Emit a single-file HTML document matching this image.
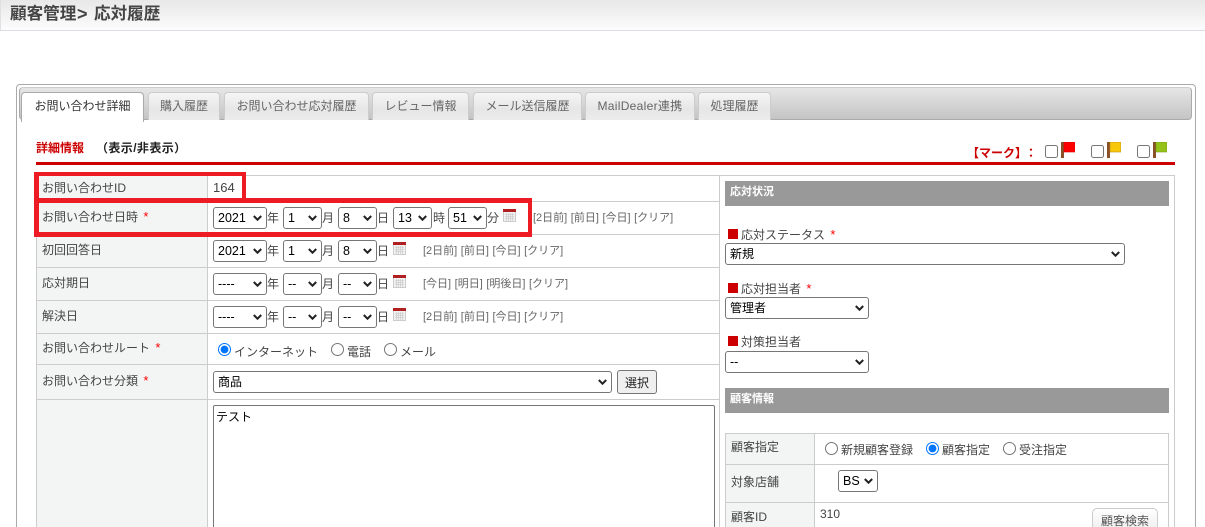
<!DOCTYPE html>
<html lang="ja"><head><meta charset="utf-8"><title>顧客管理</title>
<style>
html,body{margin:0;padding:0;background:#fff;width:1205px;height:527px;overflow:hidden}
body{position:relative;font:12px/16px "Liberation Sans","Noto Sans CJK JP",sans-serif;color:#444}
body *{box-sizing:border-box}
.a,.t,select,input,button,textarea,svg{position:absolute}
.t{white-space:nowrap}
select{height:22px;margin:0;padding:0 0 0 4px;-webkit-appearance:none;appearance:none;font:12.5px "Liberation Sans","Noto Sans CJK JP",sans-serif;color:#000;background:#fff;border:1px solid #767676;border-radius:3px}
select.j{font-size:12px}
input{margin:0;width:13px;height:13px}
.tab{position:absolute;top:92px;height:28px;border:1px solid #ccc;border-bottom:0;border-radius:4px 4px 0 0;background:linear-gradient(#f6f6f6,#e6e6e6 60%,#ececec);color:#666;text-align:center;line-height:26px}
.l{background:#ccc;position:absolute}
.lk{color:#666;font-size:11px;word-spacing:.5px}
.red{background:#ed1c24;position:absolute}
.req{color:#f00;margin-left:2px;font-size:13px}
.hd{position:absolute;left:725px;width:444px;background:#999;color:#fff;font-weight:bold;font-size:11px;line-height:22px;padding-left:5px}
.sq{position:absolute;left:728px;width:10px;height:10px;background:#c00}
</style></head><body>
<svg width="0" height="0" style="position:absolute"><defs>
<g id="c"><rect x=".5" y=".5" width="12" height="12" fill="#f2f2f2" stroke="#ccc"/><rect width="13" height="3" fill="#b02020"/><path d="M2 5.5h9M2 7.5h9M2 9.5h9M3.5 4v8M5.5 4v8M7.5 4v8M9.5 4v8" stroke="#c4c4c4" stroke-width=".6" fill="none"/></g>
<path id="v" d="M.8 1l3.7 3.7L8.2 1" fill="none" stroke="#222" stroke-width="2"/>
</defs></svg>

<div class="a" style="left:0;top:0;width:1205px;height:31px;background:linear-gradient(#e8e8e8,#fcfcfc);border-bottom:1px solid #dcdce2;border-left:1px solid #e0e0e4"></div>
<div class="t" style="left:10px;top:4px;font-size:16.6px;line-height:20px;font-weight:bold;color:#444">顧客管理</div>
<div class="t" style="left:77px;top:4px;font-size:18px;line-height:20px;font-weight:bold;color:#444">&gt;</div>
<div class="t" style="left:94px;top:4px;font-size:16.6px;line-height:20px;font-weight:bold;color:#444">応対履歴</div>

<div class="a" style="left:16px;top:84px;width:1180px;height:460px;border:1px solid #aaa;border-radius:4px"></div>
<div class="a" style="left:19px;top:87px;width:1173px;height:33px;border:1px solid #aaa;border-top-color:#ccc;border-radius:4px;background:linear-gradient(#e6e6e6,#c4c4c4)"></div>

<div class="tab" style="left:21px;width:123px;height:30px;background:#fff;border-color:#aaa;color:#333;z-index:2;border-bottom:0">お問い合わせ詳細</div>
<div class="tab" style="left:148px;width:72px">購入履歴</div>
<div class="tab" style="left:224px;width:145px">お問い合わせ応対履歴</div>
<div class="tab" style="left:372px;width:97px">レビュー情報</div>
<div class="tab" style="left:473px;width:109px">メール送信履歴</div>
<div class="tab" style="left:585px;width:110px;letter-spacing:.3px">MailDealer連携</div>
<div class="tab" style="left:698px;width:73px">処理履歴</div>

<div class="t" style="left:36px;top:140px;font-weight:bold;color:#c00">詳細情報</div>
<div class="t" style="left:96px;top:140px;font-weight:bold;color:#222;letter-spacing:.4px">（表示/非表示）</div>
<div class="t" style="left:967px;top:145px;font-weight:bold;color:#c00">【マーク】</div>
<div class="t" style="left:1025px;top:145px;font-weight:bold;color:#c00">：</div>
<input type="checkbox" style="left:1045px;top:145px"><input type="checkbox" style="left:1091px;top:145px"><input type="checkbox" style="left:1137px;top:145px">
<svg style="left:1061px;top:142px" width="14" height="16"><rect width="3" height="16" fill="#8a5028"/><rect x="3" width="11" height="10" fill="#f00" stroke="#c00" stroke-width=".6"/></svg>
<svg style="left:1107px;top:142px" width="14" height="16"><rect width="3" height="16" fill="#8a5028"/><rect x="3" width="11" height="10" fill="#f7c70a" stroke="#b98a10" stroke-width=".6"/></svg>
<svg style="left:1153px;top:142px" width="14" height="16"><rect width="3" height="16" fill="#8a5028"/><rect x="3" width="11" height="10" fill="#94c11a" stroke="#7a9a10" stroke-width=".6"/></svg>
<div class="a" style="left:36px;top:162px;width:1139px;height:3px;background:#c00"></div>

<!-- main table -->
<div class="a" style="left:37px;top:176px;width:171px;height:351px;background:#f3f5f5"></div>
<div class="l" style="left:36px;top:175px;width:1139px;height:1px"></div>
<div class="l" style="left:36px;top:175px;width:1px;height:352px"></div>
<div class="l" style="left:207px;top:175px;width:1px;height:352px"></div>
<div class="l" style="left:719px;top:175px;width:1px;height:352px"></div>
<div class="l" style="left:1174px;top:175px;width:1px;height:352px"></div>
<div class="l" style="left:36px;top:201px;width:683px;height:1px"></div>
<div class="l" style="left:36px;top:234px;width:683px;height:1px"></div>
<div class="l" style="left:36px;top:267px;width:683px;height:1px"></div>
<div class="l" style="left:36px;top:300px;width:683px;height:1px"></div>
<div class="l" style="left:36px;top:333px;width:683px;height:1px"></div>
<div class="l" style="left:36px;top:364px;width:683px;height:1px"></div>
<div class="l" style="left:36px;top:399px;width:683px;height:1px"></div>

<div class="t" style="left:42px;top:180px">お問い合わせID</div>
<div class="t" style="left:42px;top:209px">お問い合わせ日時 <span class="req">*</span></div>
<div class="t" style="left:42px;top:242px">初回回答日</div>
<div class="t" style="left:42px;top:275px">応対期日</div>
<div class="t" style="left:42px;top:308px">解決日</div>
<div class="t" style="left:42px;top:340px">お問い合わせルート <span class="req">*</span></div>
<div class="t" style="left:42px;top:373px">お問い合わせ分類 <span class="req">*</span></div>

<div class="t" style="left:213px;top:180px;font-size:13px">164</div>

<!-- row 1 -->
<select style="left:213px;top:207px;width:54px"><option>2021</option></select><div class="t" style="left:267px;top:210px">年</div>
<select style="left:283px;top:207px;width:39px"><option>1</option></select><div class="t" style="left:322px;top:210px">月</div>
<select style="left:338px;top:207px;width:39px"><option>8</option></select><div class="t" style="left:377px;top:210px">日</div>
<select style="left:393px;top:207px;width:39px"><option>13</option></select><div class="t" style="left:433px;top:210px">時</div>
<select style="left:448px;top:207px;width:39px"><option>51</option></select><div class="t" style="left:487px;top:210px">分</div>
<svg style="left:503px;top:209px" width="13" height="13"><use href="#c"/></svg>
<div class="t lk" style="left:533px;top:210px">[2日前] [前日] [今日] [クリア]</div>

<!-- row 2 -->
<select style="left:213px;top:240px;width:54px"><option>2021</option></select><div class="t" style="left:267px;top:243px">年</div>
<select style="left:283px;top:240px;width:39px"><option>1</option></select><div class="t" style="left:322px;top:243px">月</div>
<select style="left:338px;top:240px;width:39px"><option>8</option></select><div class="t" style="left:377px;top:243px">日</div>
<svg style="left:393px;top:242px" width="13" height="13"><use href="#c"/></svg>
<div class="t lk" style="left:423px;top:243px">[2日前] [前日] [今日] [クリア]</div>

<!-- row 3 -->
<select style="left:213px;top:273px;width:54px"><option>----</option></select><div class="t" style="left:267px;top:276px">年</div>
<select style="left:283px;top:273px;width:39px"><option>--</option></select><div class="t" style="left:322px;top:276px">月</div>
<select style="left:338px;top:273px;width:39px"><option>--</option></select><div class="t" style="left:377px;top:276px">日</div>
<svg style="left:393px;top:275px" width="13" height="13"><use href="#c"/></svg>
<div class="t lk" style="left:423px;top:276px">[今日] [明日] [明後日] [クリア]</div>

<!-- row 4 -->
<select style="left:213px;top:306px;width:54px"><option>----</option></select><div class="t" style="left:267px;top:309px">年</div>
<select style="left:283px;top:306px;width:39px"><option>--</option></select><div class="t" style="left:322px;top:309px">月</div>
<select style="left:338px;top:306px;width:39px"><option>--</option></select><div class="t" style="left:377px;top:309px">日</div>
<svg style="left:393px;top:308px" width="13" height="13"><use href="#c"/></svg>
<div class="t lk" style="left:423px;top:309px">[2日前] [前日] [今日] [クリア]</div>

<!-- route -->
<input type="radio" name="r" checked style="left:218px;top:343px"><div class="t" style="left:234px;top:344px">インターネット</div>
<input type="radio" name="r" style="left:331px;top:343px"><div class="t" style="left:347px;top:344px">電話</div>
<input type="radio" name="r" style="left:384px;top:343px"><div class="t" style="left:400px;top:344px">メール</div>

<select class="j" style="left:213px;top:371px;width:399px"><option>商品</option></select>
<button style="left:617px;top:370px;width:40px;height:24px;padding:0;font:12px 'Liberation Sans','Noto Sans CJK JP',sans-serif;color:#222;background:#efefef;border:1px solid #767676;border-radius:3px">選択</button>
<textarea style="left:213px;top:405px;width:502px;height:140px;margin:0;padding:3px 2px;font:12px/16px 'Liberation Sans','Noto Sans CJK JP',sans-serif;color:#000;border:1px solid #767676;border-radius:2px;resize:none;outline:0">テスト</textarea>

<!-- red highlight -->
<div class="red" style="left:34px;top:172px;width:212px;height:4px"></div>
<div class="red" style="left:34px;top:172px;width:5px;height:65px"></div>
<div class="red" style="left:242px;top:172px;width:4px;height:30px"></div>
<div class="red" style="left:34px;top:198px;width:498px;height:5px"></div>
<div class="red" style="left:528px;top:198px;width:4px;height:39px"></div>
<div class="red" style="left:34px;top:232px;width:498px;height:5px"></div>

<!-- right column -->
<div class="hd" style="top:181px;height:25px">応対状況</div>
<div class="sq" style="top:229px"></div>
<div class="t" style="left:741px;top:227px">応対ステータス <span class="req">*</span></div>
<select class="j" style="left:725px;top:243px;width:400px"><option>新規</option></select>
<div class="sq" style="top:283px"></div>
<div class="t" style="left:741px;top:281px">応対担当者 <span class="req">*</span></div>
<select class="j" style="left:725px;top:297px;width:144px"><option>管理者</option></select>
<div class="sq" style="top:336px"></div>
<div class="t" style="left:741px;top:334px">対策担当者</div>
<select style="left:725px;top:351px;width:144px"><option>--</option></select>

<div class="hd" style="top:388px;height:25px">顧客情報</div>

<div class="a" style="left:726px;top:434px;width:88px;height:93px;background:#f3f5f5"></div>
<div class="l" style="left:725px;top:433px;width:444px;height:1px"></div>
<div class="l" style="left:725px;top:464px;width:444px;height:1px"></div>
<div class="l" style="left:725px;top:502px;width:444px;height:1px"></div>
<div class="l" style="left:725px;top:433px;width:1px;height:94px"></div>
<div class="l" style="left:814px;top:433px;width:1px;height:94px"></div>
<div class="l" style="left:1168px;top:433px;width:1px;height:94px"></div>
<div class="t" style="left:731px;top:439px">顧客指定</div>
<div class="t" style="left:731px;top:474px">対象店舗</div>
<div class="t" style="left:731px;top:509px">顧客ID</div>
<input type="radio" name="k" style="left:825px;top:442px"><div class="t" style="left:841px;top:442px">新規顧客登録</div>
<input type="radio" name="k" checked style="left:926px;top:442px"><div class="t" style="left:942px;top:442px">顧客指定</div>
<input type="radio" name="k" style="left:1003px;top:442px"><div class="t" style="left:1019px;top:442px">受注指定</div>
<select style="left:838px;top:470px;width:40px"><option>BS</option></select>
<div class="t" style="left:820px;top:506px">310</div>
<button style="left:1092px;top:508px;width:66px;height:24px;padding:0;font:12px 'Liberation Sans','Noto Sans CJK JP',sans-serif;color:#555;background:linear-gradient(#fff,#eee);border:1px solid #ccc;border-radius:5px">顧客検索</button>

<!-- select chevrons -->
<svg style="left:0;top:0;pointer-events:none" width="1205" height="527">
<use href="#v" x="253" y="215"/><use href="#v" x="308" y="215"/><use href="#v" x="363" y="215"/><use href="#v" x="418" y="215"/><use href="#v" x="473" y="215"/>
<use href="#v" x="253" y="248"/><use href="#v" x="308" y="248"/><use href="#v" x="363" y="248"/>
<use href="#v" x="253" y="281"/><use href="#v" x="308" y="281"/><use href="#v" x="363" y="281"/>
<use href="#v" x="253" y="314"/><use href="#v" x="308" y="314"/><use href="#v" x="363" y="314"/>
<use href="#v" x="598" y="379"/>
<use href="#v" x="1111" y="251"/><use href="#v" x="855" y="305"/><use href="#v" x="855" y="359"/><use href="#v" x="864" y="478"/>
</svg>
</body></html>
